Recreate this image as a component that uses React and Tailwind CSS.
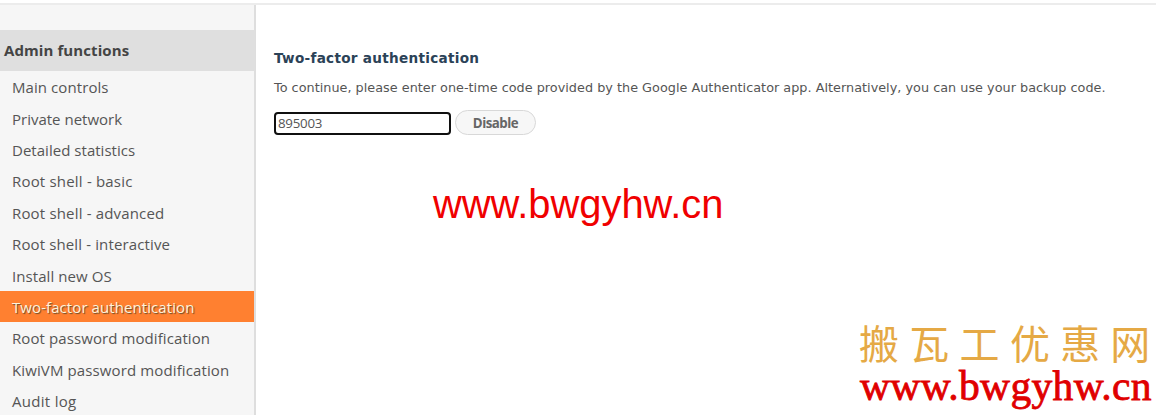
import { useState } from "react";

const menu = [
  { label: "Main controls", spacing: "tracking-[0.08px]" },
  { label: "Private network", spacing: "tracking-[0px]" },
  { label: "Detailed statistics", spacing: "tracking-[0.03px]" },
  { label: "Root shell - basic", spacing: "tracking-[0.19px]" },
  { label: "Root shell - advanced", spacing: "tracking-[0.17px]" },
  { label: "Root shell - interactive", spacing: "tracking-[0.13px]" },
  { label: "Install new OS", spacing: "tracking-[0.08px]" },
  { label: "Two-factor authentication", spacing: "tracking-[0.08px]" },
  { label: "Root password modification", spacing: "tracking-[0.09px]" },
  { label: "KiwiVM password modification", spacing: "tracking-[0.12px]" },
  { label: "Audit log", spacing: "tracking-[0.3px]" },
];

function Sidebar({ active, onSelect }) {
  return (
    <aside className="w-64 shrink-0 bg-[#f6f6f6] border-r-2 border-[#dedede] pt-[25px] font-['Open_Sans','Noto_Sans',sans-serif]">
      <h2 className="h-[41px] flex items-center pl-1 pb-px -mr-px bg-[#dfdfdf] text-[15px] font-bold text-[#444]">
        <span className="tracking-[0.09px]">Admin functions</span>
      </h2>
      <ul>
        {menu.map((item) => (
          <li key={item.label}>
            <button
              type="button"
              onClick={() => onSelect(item.label)}
              className={`flex items-center w-full h-[31.4px] pl-3 pt-[1.5px] text-[15px] whitespace-nowrap ${item.spacing} ${
                active === item.label
                  ? "bg-[#ff8030] text-[#fff3dc] [text-shadow:1px_1px_1px_#6b4a2c]"
                  : "text-[#555]"
              }`}
            >
              <span>{item.label}</span>
            </button>
          </li>
        ))}
      </ul>
    </aside>
  );
}

export default function App() {
  const [active, setActive] = useState("Two-factor authentication");
  const [code, setCode] = useState("895003");

  return (
    <div className="relative h-[415px] overflow-hidden bg-white flex flex-col">
      <div className="h-[5px] shrink-0 border-b-2 border-[#ececec]" />

      <div className="flex flex-1 min-h-0">
        <Sidebar active={active} onSelect={setActive} />

        <main className="flex-1 pl-[18px] pt-[43px] font-['DejaVu_Sans',sans-serif]">
          <h1 className="text-[13.6px] leading-5 font-bold text-[#2b4257] whitespace-nowrap">
            <span className="tracking-[0.28px]">Two-factor authentication</span>
          </h1>
          <p className="mt-[10px] text-[12.8px] leading-5 text-[#555] whitespace-nowrap">
            <span className="tracking-[0.021px]">
              To continue, please enter one-time code provided by the Google Authenticator app. Alternatively, you can use your backup code.
            </span>
          </p>

          <form className="flex items-start gap-1 mt-3" onSubmit={(e) => e.preventDefault()}>
            <input
              value={code}
              onChange={(e) => setCode(e.target.value)}
              className="w-[177px] h-[23px] mt-[2px] px-[2px] pb-[2px] rounded-[4px] border-2 border-[#101010] bg-white text-[13.3px] tracking-[-0.25px] text-[#555] outline-none font-['Open_Sans',sans-serif]"
            />
            <button
              type="submit"
              className="w-[81px] h-[25px] pt-[2px] rounded-full border border-[#d8d8d8] bg-[#f7f7f7] text-[13.3px] font-bold text-[#666] font-['Open_Sans',sans-serif]"
            >
              <span className="tracking-[-0.5px]">Disable</span>
            </button>
          </form>
        </main>
      </div>

      {/* watermarks */}
      <div className="absolute left-[433px] top-[181px] text-[39.9px] leading-[46px] text-[#f00000] whitespace-nowrap font-['Liberation_Sans',sans-serif]">
        www.bwgyhw.cn
      </div>
      <div className="absolute left-[859px] top-[321px] flex gap-[10px] text-[40px] leading-[42px] text-[#e5a945] whitespace-nowrap font-['Noto_Sans_CJK_SC',sans-serif]">
        <span className="tracking-[10.3px] -mr-[10.3px]">搬瓦工优惠</span>
        <span>网</span>
      </div>
      <div className="absolute left-[860px] top-[364px] text-[41.5px] leading-[44px] tracking-[0.35px] text-[#e00000] whitespace-nowrap font-['Liberation_Serif',serif] [-webkit-text-stroke:0.8px_#e00000]">
        www.bwgyhw.cn
      </div>
    </div>
  );
}
